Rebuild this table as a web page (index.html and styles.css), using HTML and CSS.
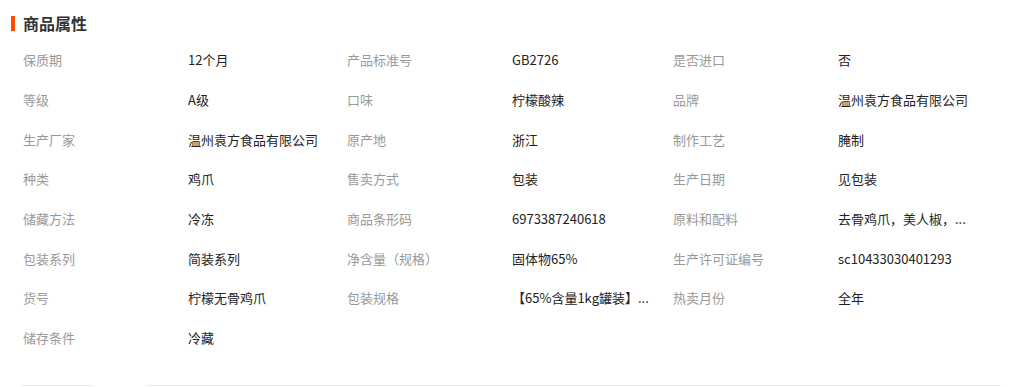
FILE: index.html
```html
<!DOCTYPE html>
<html lang="zh-CN">
<head>
<meta charset="utf-8">
<title>商品属性</title>
<link rel="stylesheet" href="styles.css">
</head>
<body>
<div class="page">
  <div class="section-title"><span class="bar"></span><h2>商品属性</h2></div>
  <div class="attrs">
    <div class="k">保质期</div><div class="v">12个月</div>
    <div class="k">产品标准号</div><div class="v">GB2726</div>
    <div class="k">是否进口</div><div class="v">否</div>

    <div class="k">等级</div><div class="v">A级</div>
    <div class="k">口味</div><div class="v">柠檬酸辣</div>
    <div class="k">品牌</div><div class="v">温州袁方食品有限公司</div>

    <div class="k">生产厂家</div><div class="v">温州袁方食品有限公司</div>
    <div class="k">原产地</div><div class="v">浙江</div>
    <div class="k">制作工艺</div><div class="v">腌制</div>

    <div class="k">种类</div><div class="v">鸡爪</div>
    <div class="k">售卖方式</div><div class="v">包装</div>
    <div class="k">生产日期</div><div class="v">见包装</div>

    <div class="k">储藏方法</div><div class="v">冷冻</div>
    <div class="k">商品条形码</div><div class="v">6973387240618</div>
    <div class="k">原料和配料</div><div class="v">去骨鸡爪，美人椒，...</div>

    <div class="k">包装系列</div><div class="v">简装系列</div>
    <div class="k">净含量（规格）</div><div class="v">固体物65%</div>
    <div class="k">生产许可证编号</div><div class="v">sc10433030401293</div>

    <div class="k">货号</div><div class="v">柠檬无骨鸡爪</div>
    <div class="k">包装规格</div><div class="v">【65%含量1kg罐装】...</div>
    <div class="k">热卖月份</div><div class="v">全年</div>

    <div class="k">储存条件</div><div class="v">冷藏</div>
  </div>
  <div class="next-row">
    <div class="box small"></div>
    <div class="box wide"></div>
  </div>
</div>
</body>
</html>
```
FILE: styles.css
```css
html, body {
  margin: 0;
  padding: 0;
  background: #fff;
  overflow: hidden;
}
body {
  font-family: "Noto Sans CJK SC", "Noto Sans", sans-serif;
  color: #333;
}
.page {
  width: 1012px;
}
.section-title {
  display: flex;
  align-items: center;
  gap: 8px;
  height: 30px;
  padding: 8px 0 0 11px;
}
.section-title .bar {
  width: 4px;
  height: 15px;
  background: #ff4d00;
}
.section-title h2 {
  margin: 0;
  font-size: 16px;
  font-weight: bold;
  line-height: 30px;
  color: #333;
}
.attrs {
  display: grid;
  grid-template-columns: 165px 159px 165px 161px 165px 150px;
  grid-auto-rows: 39.7px;
  padding: 2px 0 0 23px;
  font-size: 13px;
}
.attrs .k,
.attrs .v {
  display: flex;
  align-items: center;
  white-space: nowrap;
  overflow: hidden;
}
.attrs .k {
  color: #999;
}
.attrs .v {
  color: #222;
}
.next-row {
  display: flex;
  gap: 56px;
  height: 1px;
  overflow: hidden;
  margin: 27px 0 0 22px;
}
.box {
  height: 0;
  border-top: 1px solid #e6e6e6;
}
.box.small {
  width: 69px;
}
.box.wide {
  width: 854px;
}
```
